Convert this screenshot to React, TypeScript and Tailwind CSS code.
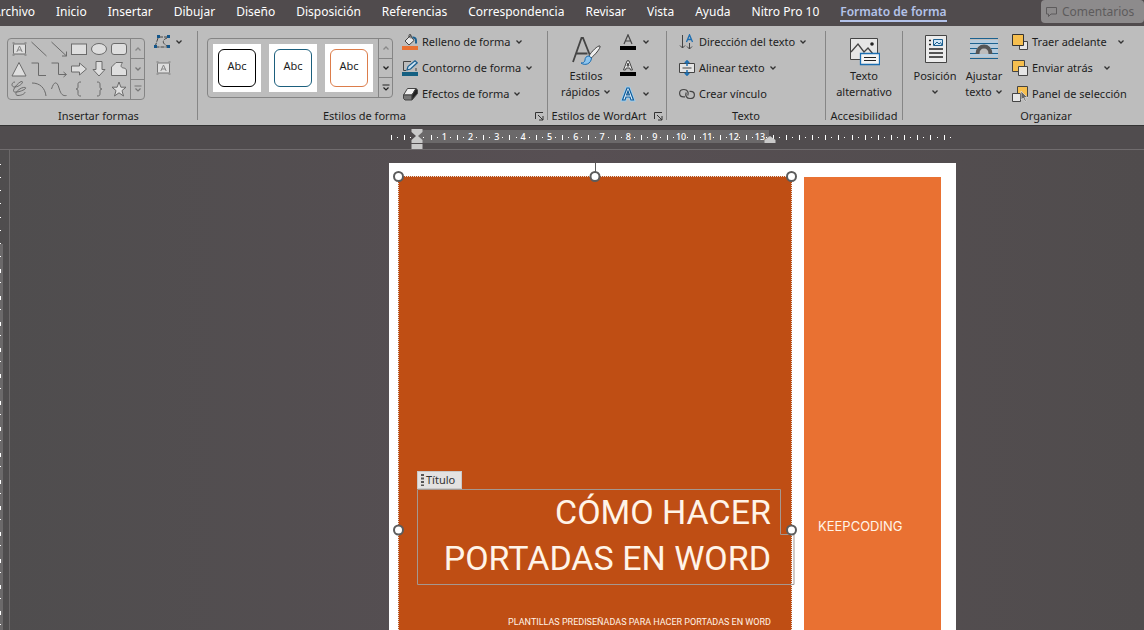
import React from "react";

const Chevron = ({ className = "text-[#333]" }: { className?: string }) => (
  <svg viewBox="0 0 8 8" className={`h-2 w-2 shrink-0 ${className}`} fill="none" stroke="currentColor" strokeWidth="1.3">
    <path d="M1.5 2.5 4 5l2.5-2.5" />
  </svg>
);

const Icon = ({ children, className = "h-4 w-4" }: { children: React.ReactNode; className?: string }) => (
  <svg viewBox="0 0 16 16" className={`shrink-0 ${className}`} fill="none" stroke="#444" strokeWidth="1">
    {children}
  </svg>
);

const tabs = [
  "Archivo",
  "Inicio",
  "Insertar",
  "Dibujar",
  "Diseño",
  "Disposición",
  "Referencias",
  "Correspondencia",
  "Revisar",
  "Vista",
  "Ayuda",
  "Nitro Pro 10",
  "Formato de forma",
];

const TextBoxGlyph = () => (
  <>
    <rect x="4.500" y="5" width="12" height="10" rx="1" fill="#dedede" />
    <path d="M3.500 4h2M15.500 4h2M3.500 16h2M15.500 16h2" />
    <path d="M7.800 13 10.500 7l2.700 6M8.800 11h3.400" stroke="#858585" />
  </>
);

const shapes: [string, React.ReactNode][] = [
  ["Cuadro de texto", <TextBoxGlyph />],
  ["Línea", <path d="M2.500 3 17.500 17" />],
  ["Flecha", <path d="M2.500 3 17.500 17M17.500 12.500V17H13" />],
  ["Rectángulo", <rect x="2.500" y="5" width="15" height="10.500" fill="#dedede" />],
  ["Elipse", <ellipse cx="10" cy="10" rx="7.500" ry="5.500" fill="#dedede" />],
  ["Rectángulo redondeado", <rect x="2.500" y="4.500" width="15" height="11" rx="2.500" fill="#dedede" />],
  ["Triángulo", <path d="M10 3.500 17 17H3z" fill="#dedede" />],
  ["Conector angular", <path d="M2.500 4h7v12.500h7.500" />],
  ["Conector de flecha", <path d="M2.500 4h7v11.500h7.500M14.500 13l3 2.500-3 2.500" />],
  ["Flecha derecha", <path d="M2.500 7h8V4l7 6-7 6v-3h-8z" fill="#dedede" />],
  ["Flecha abajo", <path d="M7 2.500h6v8h3l-6 6.500-6-6.500h3z" fill="#dedede" />],
  ["Forma libre", <path d="M2.500 16.500V8l4.500-4.500h6.500c-2 3-2 5 1 5.500 2 .3 3 1 3 3v4.500z" fill="#dedede" />],
  [
    "A mano alzada",
    <path d="M6 3C2 3 2 8.500 6 8c5-.5 9-5 7-5.500S5 8 4.500 11.500s9 .5 11.500-1.500-2-2.500-6 .5-4 6-1 6 7-1.500 7-3.500" />,
  ],
  ["Arco", <path d="M3 4c8 0 13 5 14 13" />],
  ["Curva", <path d="M2.500 10C5 2 8 2 10 9s4 8 7.500 7.500" />],
  ["Llave izquierda", <path d="M12 3c-3 0-3 1-3 3v2c0 1.500-1 2-2 2 1 0 2 .5 2 2v2c0 2 0 3 3 3" />],
  ["Llave derecha", <path d="M8 3c3 0 3 1 3 3v2c0 1.500 1 2 2 2-1 0-2 .5-2 2v2c0 2 0 3-3 3" />],
  ["Estrella", <path d="m10 3 1.900 5.200h5.100l-4 3.400 1.500 5.400-4.500-3.200L5.500 17 7 11.600 3 8.200h5.100z" fill="#dedede" />],
];

const GalleryScroll = ({ tone }: { tone: string }) => (
  <div className={`flex w-[14px] flex-col divide-y divide-[#858585] border-l border-[#858585] ${tone}`}>
    <button aria-label="Fila anterior" className="flex flex-1 items-center justify-center">
      <Chevron className="rotate-180 text-[#888]" />
    </button>
    <button aria-label="Fila siguiente" className="flex flex-1 items-center justify-center">
      <Chevron className="text-current" />
    </button>
    <button aria-label="Más" className="flex flex-1 items-center justify-center">
      <svg viewBox="0 0 8 8" className="h-2 w-2" fill="none" stroke="currentColor" strokeWidth="1.200">
        <path d="M0.500 1h7M1.500 3.500 4 6l2.500-2.500" />
      </svg>
    </button>
  </div>
);

const Group = ({
  label,
  launcher = false,
  width,
  children,
}: {
  label: string;
  launcher?: boolean;
  width: string;
  children: React.ReactNode;
}) => (
  <section aria-label={label} className={`flex shrink-0 flex-col pt-[5px] ${width}`}>
    <div className="flex h-[77px]">{children}</div>
    <div className="flex h-4 items-center">
      <span className="flex-1 text-center whitespace-nowrap">{label}</span>
      {launcher && (
        <button aria-label={`Opciones de ${label}`} className="mr-[3px] ml-1">
          <svg viewBox="0 0 9 9" className="h-[9px] w-[9px]" fill="none" stroke="#333">
            <path d="M.5 7V.5H8M3 3l5 5M8 4v4H4" />
          </svg>
        </button>
      )}
    </div>
  </section>
);

const Divider = () => <div className="my-[5px] w-px shrink-0 bg-[#868686]" />;

const Row = ({
  icon,
  text,
  arrow = true,
  gap = "gap-1",
}: {
  icon: React.ReactNode;
  text: string;
  arrow?: boolean;
  gap?: string;
}) => (
  <button className={`flex h-[22px] items-center whitespace-nowrap ${gap}`}>
    <span className="flex items-center gap-1">
      {icon}
      {text}
    </span>
    {arrow && <Chevron />}
  </button>
);

const Large = ({
  icon,
  first,
  second,
  arrow = false,
  width,
}: {
  icon: React.ReactNode;
  first: string;
  second?: string;
  arrow?: boolean;
  width: string;
}) => (
  <button className={`flex shrink-0 flex-col items-center pt-1 whitespace-nowrap ${width}`}>
    <svg viewBox="0 0 32 32" className="mb-px h-8 w-8" fill="none" stroke="#444">
      {icon}
    </svg>
    <span className="leading-4">{first}</span>
    <span className="flex h-4 items-center gap-[3px] leading-4">
      {second}
      {arrow && <Chevron />}
    </span>
  </button>
);

const Handle = ({ className }: { className: string }) => (
  <span className={`absolute h-[11px] w-[11px] rounded-full border-2 border-[#5c5c5c] bg-white ${className}`} />
);

const styles = ["border-black", "border-[#1b5f7d]", "border-[#dc7d4b]"];

const Ribbon = () => (
  <div className="flex h-[100px] shrink-0 overflow-hidden border-b border-[#333] bg-[#bdbdbd] text-[11px] text-[#1d1d1d]">
    <Group label="Insertar formas" width="w-[197px]">
      <div className="mt-[7px] ml-[7px] flex h-[62px] rounded border border-[#858585]">
        <div className="grid grid-cols-6 pl-px">
          {shapes.map(([name, drawing]) => (
            <button key={name} aria-label={name} className="h-5 w-5">
              <svg viewBox="0 0 20 20" className="h-5 w-5" fill="none" stroke="#6b6b6b" strokeWidth="1">
                {drawing}
              </svg>
            </button>
          ))}
        </div>
        <GalleryScroll tone="ml-px text-[#777]" />
      </div>
      <div className="ml-2 flex flex-col gap-1">
        <button aria-label="Editar forma" className="flex h-[22px] items-center gap-1">
          <svg viewBox="0 0 18 16" className="h-4 w-[18px]" fill="none" stroke="#444">
            <path d="M6 3h9M5 4 2 13h13M14 4c-5 2-5 5 0 8" strokeDasharray="4 1" />
            <path d="M4 1h3v3H4zM14 1h3v3h-3zM1 11h3v3H1zM14 11h3v3h-3z" fill="#14568a" stroke="none" />
          </svg>
          <Chevron />
        </button>
        <button aria-label="Dibujar cuadro de texto" className="flex h-[22px] items-center">
          <svg viewBox="0 0 20 20" className="h-5 w-5" fill="none" stroke="#777">
            <TextBoxGlyph />
          </svg>
        </button>
      </div>
    </Group>
    <Divider />
    <Group label="Estilos de forma" launcher width="w-[349px]">
      <div className="mt-[7px] ml-[9px] flex h-[60px] rounded border border-[#858585]">
        <div className="flex gap-2 px-[5px] pt-[5px]">
          {styles.map((border) => (
            <button key={border} className="h-12 w-12 bg-white p-[5px]">
              <span className={`flex h-[38px] items-center justify-center rounded-md border pb-1 ${border}`}>Abc</span>
            </button>
          ))}
        </div>
        <GalleryScroll tone="text-[#222]" />
      </div>
      <div className="ml-[9px] flex flex-col items-start gap-1">
        <Row
          text="Relleno de forma"
          icon={
            <Icon>
              <path d="M3 7 8.500 1.500 12 6.500 7 11z" fill="#e8e8e8" />
              <path d="M7 4V1.500c0-1.500 2-1.500 2 0v3" />
              <path d="M10.500 3.500c3-.5 4 2 3.500 6" stroke="#1b5f8f" strokeWidth="2" />
              <path d="M0 12h16v4H0z" fill="#e97132" stroke="none" />
            </Icon>
          }
        />
        <Row
          text="Contorno de forma"
          icon={
            <Icon>
              <path d="M9 1.500H1.500v9H4M14 8v3" />
              <path d="m5 10 1-3.500L13 .8l2.200 2L8.500 9z" fill="#cde3f3" stroke="#1b5f8f" strokeWidth="1.200" />
              <path d="M0 12h16v4H0z" fill="#156082" stroke="none" />
            </Icon>
          }
        />
        <Row
          text="Efectos de forma"
          icon={
            <Icon>
              <path d="M5.500 2.500H14L10 9H1.500z" fill="#f0f0f0" />
              <path d="M1.500 9v3.500L3 14h7V9z" fill="#777" />
              <path d="m10 9 4-6.500 1.500 1.500v3.500L10 14z" fill="#222" />
            </Icon>
          }
        />
      </div>
    </Group>
    <Divider />
    <Group label="Estilos de WordArt" launcher width="w-[118px]">
      <Large
        width="w-[76px]"
        first="Estilos"
        second="rápidos"
        arrow
        icon={
          <>
            <path d="M3 27 11.500 3h1.500l8 20M6.500 18.500h11" strokeWidth="1.800" />
            <path d="M30 11c1 2-6 10-9 12l-2-2c2-4 9-11 11-10z" fill="#eee" />
            <path d="M19 21c-3 0-4 2-4 4s-2 3-4 3c4 3 10 1 10.500-5z" fill="#8ec5ee" stroke="#1b6db0" />
          </>
        }
      />
      <div className="ml-[-4px] flex flex-col items-start gap-1">
        {["Relleno de texto", "Contorno de texto", "Efectos de texto"].map((name, i) => (
          <button key={name} aria-label={name} className="flex h-[22px] items-center gap-[6px]">
            <Icon>
              {i === 0 && <path d="M4 10 8 .8 12 10M5.300 7h5.400" strokeWidth="1.200" />}
              {i === 1 && <path d="M3.500 10 7 .8h2l3.500 9.200h-2L9.800 8H6.200l-.7 2zM7 6h2L8 3z" fill="#eee" />}
              {i < 2 && <path d="M0 12h16v4H0z" fill="#000" stroke="none" />}
              {i === 2 && (
                <>
                  <path d="M2.500 14 7 2h2l4.500 12h-2.500l-1-3H6l-1 3z" stroke="#9ed0f2" strokeWidth="3" />
                  <path d="M2.500 14 7 2h2l4.500 12h-2.500l-1-3H6l-1 3zM6.600 9h2.800L8 5z" fill="#e8f3fb" stroke="#0f5a98" strokeWidth="1.200" />
                </>
              )}
            </Icon>
            <Chevron />
          </button>
        ))}
      </div>
    </Group>
    <Divider />
    <Group label="Texto" width="w-[158px]">
      <div className="ml-3 flex flex-col items-start gap-1">
        <Row
          text="Dirección del texto"
          icon={
            <Icon>
              <path d="M3.500 1v13M1 11.500 3.500 14 6 11.500M10.500 9v6M8 12.500l2.500 2.500 2.500-2.500" />
              <path d="M7.500 8 10.500.8 13.500 8M8.500 5.500h4" stroke="#1b6db0" strokeWidth="1.300" />
            </Icon>
          }
        />
        <Row
          text="Alinear texto"
          icon={
            <Icon>
              <path d="M.5 3.500h15v9H.5z" fill="#e4e4e4" />
              <path d="M3.500 8h9" />
              <path d="M8 .8V6M5.800 3 8 .8 10.200 3M8 10v5.200M5.800 13 8 15.200l2.200-2.200" stroke="#1b6db0" strokeWidth="1.500" />
            </Icon>
          }
        />
        <Row
          text="Crear vínculo"
          arrow={false}
          icon={
            <Icon>
              <path
                d="M8.800 9.500c1.200-3-.3-6-3.800-6C2 3.500.6 5 .6 7.200S2 10.800 4.500 10.800H6M7.200 6.500c-1.200 3 .3 6 3.800 6 3 0 4.400-1.500 4.400-3.600s-1.400-3.600-3.900-3.600h-1"
                strokeWidth="1.200"
              />
            </Icon>
          }
        />
      </div>
    </Group>
    <Divider />
    <Group label="Accesibilidad" width="w-[76px]">
      <Large
        width="w-full"
        first="Texto"
        second="alternativo"
        icon={
          <>
            <path d="M2.500 3.500h27v21h-27z" fill="#e6e6e6" />
            <path d="m3 17 7-8 6 8 4-4 5 6" strokeWidth="1.300" />
            <circle cx="24" cy="9" r="1.800" fill="#222" stroke="none" />
            <path d="M12.500 18.500h19v11h-19z" fill="#f4f4f4" stroke="#1b6db0" strokeWidth="1.300" />
            <path d="M16 22.500h12M16 25.500h12" stroke="#222" />
          </>
        }
      />
    </Group>
    <Divider />
    <Group label="Organizar" width="w-[286px]">
      <Large
        width="ml-2 w-12"
        first="Posición"
        arrow
        icon={
          <>
            <path d="M6.500.5h21v27h-21z" fill="#ececec" />
            <path d="M10 5.500h2M10 9.500h2M10 14h14M10 18h14M10 22h14" stroke="#222" strokeWidth="1.300" />
            <path d="M14.500 4.500h9v6h-9z" fill="#cfe5f6" stroke="#1b5f8f" />
            <path d="m15 10 3-3 2 2 1.500-1.500L23 10" stroke="#1b5f8f" />
          </>
        }
      />
      <Large
        width="w-[50px]"
        first="Ajustar"
        second="texto"
        arrow
        icon={
          <>
            <path d="M2 5h28v17H2z" fill="#b5cbdc" stroke="none" />
            <path d="M2 3.500h28M2 8.500h28M2 13.500h7M23 13.500h7M2 18.500h6M24 18.500h6M2 23.500h28" stroke="#1b6290" strokeWidth="1.200" />
            <path d="M9.500 19c0-10 13-10 13 0" fill="#bdbdbd" stroke="#555" strokeWidth="4" />
          </>
        }
      />
      <div className="ml-[3px] flex flex-col items-start gap-1">
        <Row
          text="Traer adelante"
          gap="gap-[10px]"
          icon={
            <Icon>
              <path d="M7.500 7.500h8v8h-8z" fill="#e6e6e6" />
              <path d="M.5.5h11v11H.5z" fill="#f6bf4f" stroke="#333" />
            </Icon>
          }
        />
        <Row
          text="Enviar atrás"
          gap="gap-[10px]"
          icon={
            <Icon>
              <path d="M.5.5h12v11H.5z" fill="#f6bf4f" />
              <path d="M6.500 6.500h9v9h-9z" fill="#e6e6e6" />
            </Icon>
          }
        />
        <Row
          text="Panel de selección"
          arrow={false}
          icon={
            <Icon>
              <path d="M5.500.5h10v10h-10z" fill="#f6bf4f" />
              <path d="M.5 7.500h8v8h-8z" fill="#e6e6e6" />
              <path d="m9 5 .2 9 2-2 1.800 3.500 1.200-.8-1.500-3.200h2.800z" fill="#666" stroke="#eee" strokeWidth=".6" />
            </Icon>
          }
        />
      </div>
    </Group>
  </div>
);

const HorizontalRuler = () => (
  <div className="relative h-6 shrink-0 overflow-hidden border-b border-[#706c6e] pl-[385px]">
    <div className="absolute top-1 left-[418px] h-[13px] w-[351px] bg-[#6b696a]" />
    <div className="relative mt-1 flex h-[14px] w-[566px]">
      {Array.from({ length: 43 }, (_, i) => {
        const half = i - 2;
        const number = half > 0 && half <= 26 && half % 2 === 0;
        return (
          <div key={i} className="relative flex flex-1 basis-0 items-center justify-center">
            {number ? (
              <span className="w-0 text-[9px] leading-[14px] font-medium text-white">
                <span className="flex justify-center whitespace-nowrap">{half / 2}</span>
              </span>
            ) : (
              half !== 0 && <span className="h-[5px] w-px bg-white" />
            )}
            <span className="absolute right-0 h-px w-px bg-white" />
          </div>
        );
      })}
    </div>
    <svg viewBox="0 0 12 20" className="absolute top-[3px] left-[411px] h-5 w-3" fill="#c9c9c9">
      <path d="M.5 0h11v3L7 7l4.500 4v3H.5v-3L5 7 .5 3zM.5 15h11v5H.5z" />
    </svg>
    <svg viewBox="0 0 12 7" className="absolute top-[10px] left-[764px] h-[7px] w-3" fill="#c9c9c9">
      <path d="M.5 7V4L6 0l5.500 4v3z" />
    </svg>
  </div>
);

const VerticalRuler = () => (
  <div className="relative w-[10px] shrink-0 overflow-hidden border-r border-[#6b6869]">
    <div className="absolute top-[94px] bottom-0 left-0 w-[3px] bg-[#6b696a]" />
    <svg className="absolute top-0 left-0 h-full w-[2px]" fill="#fff">
      {Array.from({ length: 60 }, (_, i) => (
        <rect key={i} x="0" y={Math.round(14 + i * 13.15)} width="1" height={i > 6 && i % 2 === 0 ? 4 : 1} />
      ))}
    </svg>
  </div>
);

export default function App() {
  return (
    <div className="flex h-screen flex-col overflow-hidden bg-[#504c4e] font-['Noto_Sans',sans-serif]">
      <header className="flex h-[26px] shrink-0 items-start overflow-hidden bg-[#504b4d] text-white">
        <nav className="-ml-[7px] flex shrink-0 gap-[21px] text-[12px]">
          {tabs.map((tab) => (
            <a
              key={tab}
              href="#"
              className={
                tab === "Formato de forma"
                  ? "border-b-2 border-[#b4c3ea] pt-[3px] leading-[17px] font-semibold whitespace-nowrap text-[#b4c3ea]"
                  : "pt-[3px] leading-[17px] whitespace-nowrap"
              }
            >
              {tab}
            </a>
          ))}
        </nav>
        <button className="ml-auto flex h-[23px] w-[103px] shrink-0 items-center gap-1 rounded bg-[#8d8b8c] pl-1 text-[12px] text-[#5d5b5c]">
          <svg viewBox="0 0 13 12" className="h-3 w-[13px]" fill="none" stroke="currentColor">
            <path d="M1.500 1.500h10v6.500H6L3.500 10.500V8h-2z" />
          </svg>
          Comentarios
        </button>
      </header>
      <Ribbon />
      <HorizontalRuler />
      <main className="flex min-h-0 flex-1 bg-linear-to-r from-[#4f4d4e] via-[#574f53] to-[#504c4d]">
        <VerticalRuler />
        <div className="min-w-0 flex-1 overflow-hidden pt-[13px] pl-[379px]">
          <article className="flex w-[567px] gap-3 bg-white pt-[13px] pr-[15px] pl-[9px]">
            <div className="relative flex h-[708px] flex-1 flex-col border border-dotted border-[#6b3a20] bg-[#bf4e14] pt-[294px] outline outline-dotted outline-[#e9e1dc] -outline-offset-1">
              <span className="absolute -top-[14px] left-1/2 h-[14px] w-px bg-[#5c5c5c]" />
              <Handle className="-top-[6px] -left-[6px]" />
              <Handle className="-top-[6px] left-1/2 -translate-x-1/2" />
              <Handle className="-top-[6px] -right-[6px]" />
              <Handle className="top-1/2 -left-[6px] -translate-y-1/2" />
              <span className="ml-[18px] flex h-[18px] w-[45px] items-center gap-[2px] border border-[#c9c9c9] bg-[#e4e2e1] pl-[3px] text-[11px] text-[#333]">
                <svg viewBox="0 0 3 12" className="h-3 w-[3px]" fill="#555">
                  <path d="M0 0h3v2H0zM0 3.500h3v2H0zM0 7h3v2H0zM0 10.500h3v1.500H0z" />
                </svg>
                Título
              </span>
              <div className="relative mx-[18px] font-[Roboto,sans-serif] text-[#fff4e8]">
                <svg viewBox="0 0 378 98" className="absolute top-0 left-0 h-[98px] w-[378px]" fill="none" stroke="#a5978f">
                  <path d="M.5.5h363v45h13.500v50H.5z" />
                </svg>
                <h1 className="relative pr-[2px] text-right text-[34px] leading-[46px]">
                  CÓMO HACER
                  <br />
                  PORTADAS EN WORD
                </h1>
                <p className="mt-[34px] pr-[2px] text-right text-[9px] leading-[14px] whitespace-nowrap">
                  PLANTILLAS PREDISEÑADAS PARA HACER PORTADAS EN WORD
                </p>
              </div>
              <Handle className="top-1/2 -right-[6px] -translate-y-1/2" />
            </div>
            <aside className="mt-px w-[137px] bg-[#e97132] pt-[341px] pl-[14px] font-[Inter,sans-serif] text-[13px] leading-4 text-[#fff4e8]">
              KEEPCODING
            </aside>
          </article>
        </div>
      </main>
    </div>
  );
}
